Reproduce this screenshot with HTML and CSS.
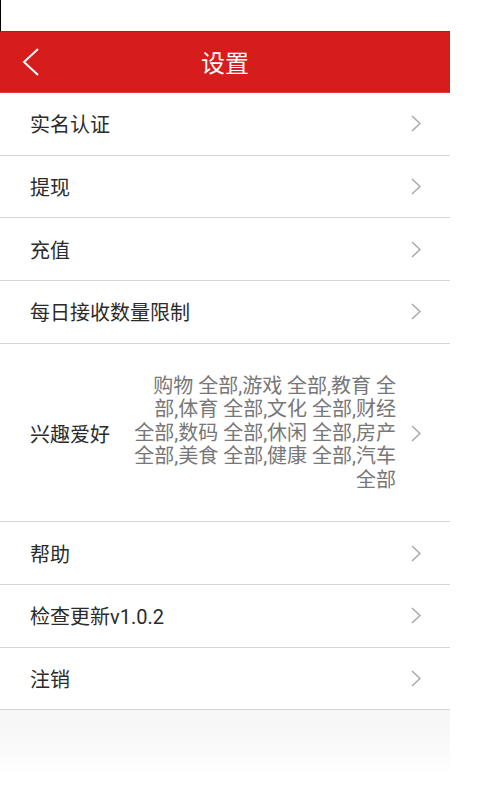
FILE: index.html
```html
<!DOCTYPE html>
<html lang="zh-CN">
<head>
<meta charset="utf-8">
<title>设置</title>
<link rel="stylesheet" href="styles.css">
</head>
<body>
<div class="status"></div>
<div class="app">
  <header class="header">
    <div class="header-left">
      <svg class="back" width="18" height="30" viewBox="0 0 18 30"><polyline points="16,2 2,15 16,28" fill="none" stroke="#fff" stroke-width="2"/></svg>
    </div>
    <h1 class="title">设置</h1>
    <div class="header-right"></div>
  </header>
  <ul class="list">
    <li class="row"><span class="label">实名认证</span><svg class="chev" width="10" height="17" viewBox="0 0 10 17"><polyline points="1,1 9,8.5 1,16" fill="none" stroke="#a8a8a8" stroke-width="1.5"/></svg></li>
    <li class="row"><span class="label">提现</span><svg class="chev" width="10" height="17" viewBox="0 0 10 17"><polyline points="1,1 9,8.5 1,16" fill="none" stroke="#a8a8a8" stroke-width="1.5"/></svg></li>
    <li class="row"><span class="label">充值</span><svg class="chev" width="10" height="17" viewBox="0 0 10 17"><polyline points="1,1 9,8.5 1,16" fill="none" stroke="#a8a8a8" stroke-width="1.5"/></svg></li>
    <li class="row"><span class="label">每日接收数量限制</span><svg class="chev" width="10" height="17" viewBox="0 0 10 17"><polyline points="1,1 9,8.5 1,16" fill="none" stroke="#a8a8a8" stroke-width="1.5"/></svg></li>
    <li class="row row-tall"><span class="label">兴趣爱好</span><span class="value">购物 全部,游戏 全部,教育 全<br>部,体育 全部,文化 全部,财经<br>全部,数码 全部,休闲 全部,房产<br>全部,美食 全部,健康 全部,汽车<br>全部</span><svg class="chev" width="10" height="17" viewBox="0 0 10 17"><polyline points="1,1 9,8.5 1,16" fill="none" stroke="#a8a8a8" stroke-width="1.5"/></svg></li>
    <li class="row"><span class="label">帮助</span><svg class="chev" width="10" height="17" viewBox="0 0 10 17"><polyline points="1,1 9,8.5 1,16" fill="none" stroke="#a8a8a8" stroke-width="1.5"/></svg></li>
    <li class="row"><span class="label">检查更新v1.0.2</span><svg class="chev" width="10" height="17" viewBox="0 0 10 17"><polyline points="1,1 9,8.5 1,16" fill="none" stroke="#a8a8a8" stroke-width="1.5"/></svg></li>
    <li class="row"><span class="label">注销</span><svg class="chev" width="10" height="17" viewBox="0 0 10 17"><polyline points="1,1 9,8.5 1,16" fill="none" stroke="#a8a8a8" stroke-width="1.5"/></svg></li>
  </ul>
  <div class="shade"></div>
</div>
</body>
</html>
```

FILE: styles.css
```css
html, body {
  margin: 0;
  padding: 0;
  background: #ffffff;
}
body {
  font-family: Roboto, "Noto Sans CJK SC", sans-serif;
  width: 482px;
  height: 800px;
  overflow: hidden;
}
.status {
  height: 31px;
  border-left: 1px solid #000;
  box-sizing: border-box;
}
.app {
  width: 450px;
}
.header {
  height: 62px;
  box-sizing: border-box;
  background: #d71c1c;
  border-top: 1px solid #a8231f;
  border-bottom: 1px solid #e43a36;
  display: grid;
  grid-template-columns: 1fr auto 1fr;
  align-items: center;
}
.header-left {
  display: flex;
  align-items: center;
  padding-left: 22px;
}
.back {
  display: block;
}
.title {
  margin: 0;
  font-family: "Noto Sans CJK SC", sans-serif;
  font-size: 24px;
  font-weight: normal;
  color: #ffffff;
  line-height: 30px;
}
.list {
  list-style: none;
  margin: 0;
  padding: 0;
  background: #fff;
}
.row {
  height: 62.7px;
  box-sizing: border-box;
  border-bottom: 1px solid #d6d6d6;
  display: flex;
  align-items: center;
  padding: 0 29px 0 30px;
}
.row-tall {
  height: 178.5px;
  padding-top: 2px;
}
.label {
  flex: 1;
  font-size: 20px;
  color: #2b2b2b;
  white-space: nowrap;
}
.value {
  font-size: 20px;
  line-height: 23.5px;
  color: #777777;
  text-align: right;
  margin-right: 15px;
  white-space: nowrap;
}
.chev {
  display: block;
  flex: none;
}
.shade {
  height: 66px;
  background: linear-gradient(#f6f6f6, #fafafa 60%, #ffffff);
}
```
